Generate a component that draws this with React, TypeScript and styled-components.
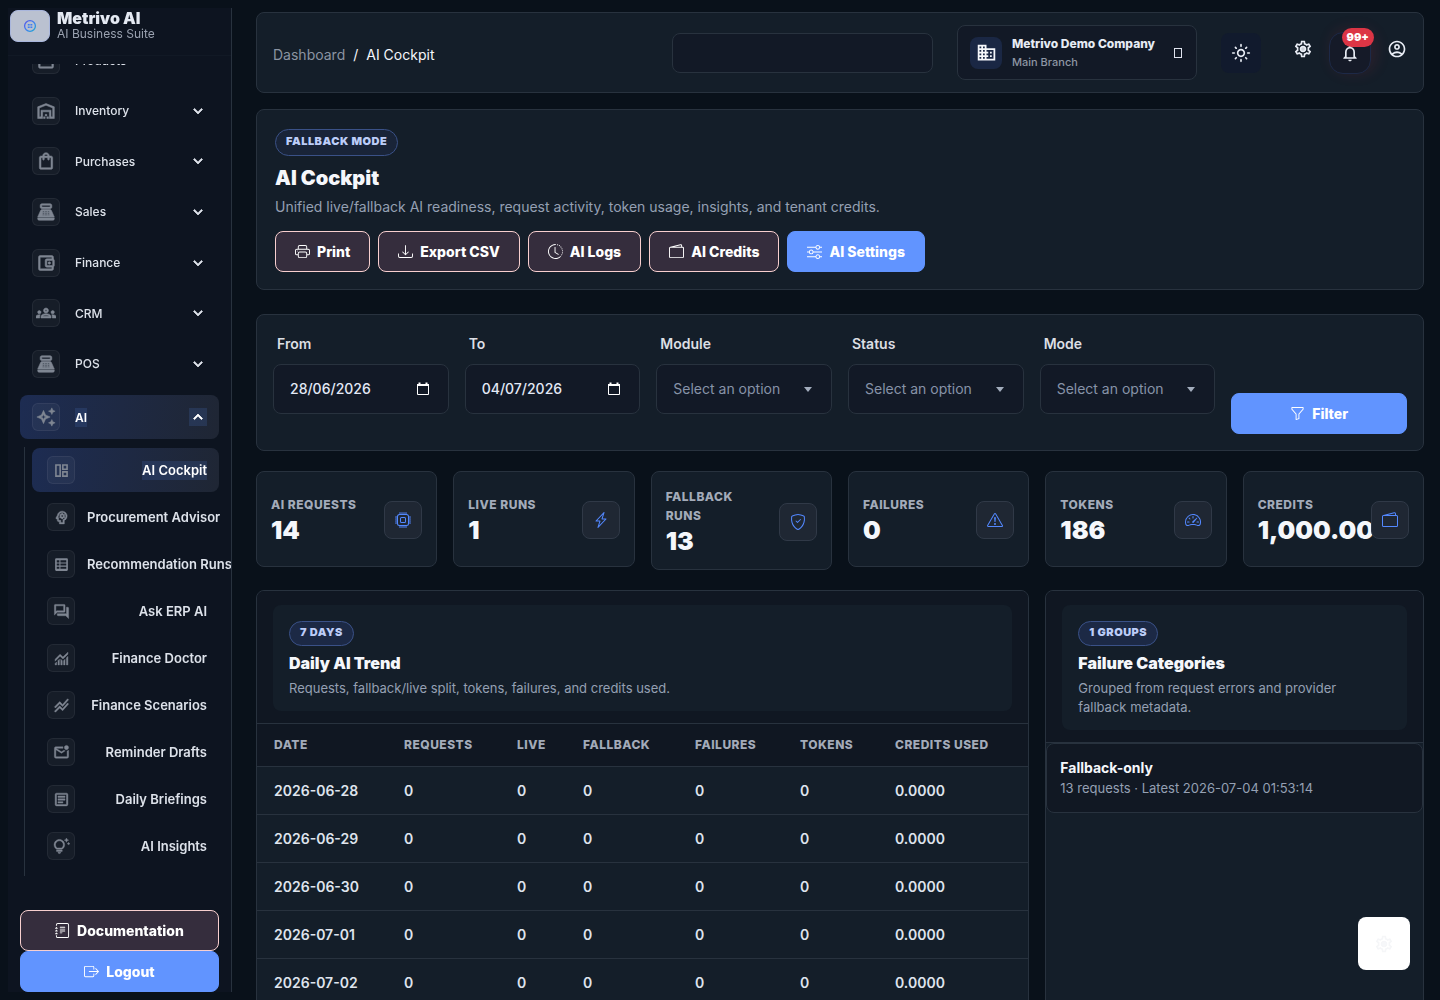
import React from 'react';
import styled, { createGlobalStyle, css } from 'styled-components';
import {
  MdOutlineInventory2, MdOutlineWarehouse, MdOutlineShoppingBag, MdOutlinePointOfSale,
  MdOutlineAccountBalanceWallet, MdOutlineGroups, MdOutlineAutoAwesome,
  MdOutlinePsychology, MdOutlineForum, MdStackedLineChart,
  MdOutlineMarkEmailUnread, MdOutlineArticle, MdOutlineTipsAndUpdates, MdKeyboardArrowDown,
  MdKeyboardArrowUp, MdOutlineBusiness, MdOutlineLightMode, MdOutlineSettings,
  MdOutlineNotifications, MdOutlineAccountCircle,
} from 'react-icons/md';
import {
  BsPrinter, BsDownload, BsClockHistory, BsWallet2, BsSliders, BsFunnel, BsJournalText,
  BsBoxArrowRight, BsCpu, BsLightningCharge, BsShieldCheck, BsExclamationTriangle, BsSpeedometer2,
} from 'react-icons/bs';

const c = {
  page: '#09111a',
  sidebar: '#0d1420',
  card: '#141e29',
  sunken: '#101722',
  field: '#121926',
  line: '#28323e',
  text: '#f5f7fb',
  muted: '#95a0b3',
  blue: '#6194ff',
  pink: '#f8cfcf',
  plum: '#352d3d',
};

const Global = createGlobalStyle`
  *, *::before, *::after { box-sizing: border-box; }
  body { margin: 0; background: ${c.page}; color: ${c.text}; font: 400 14px/19px Inter, "Liberation Sans", sans-serif; }
  button, input, select { font: inherit; color: inherit; }
  h1, h2, p, ul { margin: 0; padding: 0; }
  ul { list-style: none; }
  a { color: inherit; text-decoration: none; }
`;

const Shell = styled.div`
  display: flex;
  height: 100vh;
`;

const Sidebar = styled.aside`
  display: flex;
  flex-direction: column;
  flex: 0 0 224px;
  margin: 8px 0 8px 8px;
  background: ${c.sidebar};
  border-right: 1px solid ${c.line};
  overflow: hidden;
  will-change: transform;
`;

const Brand = styled.a`
  display: flex;
  flex: 0 0 48px;
  align-items: flex-start;
  gap: 7px;
  padding: 2px;
  border-bottom: 1px solid #111925;
`;

const BrandMark = styled.span`
  display: grid;
  place-items: center;
  width: 40px;
  height: 32px;
  border: 1px solid #a9b6dc;
  border-radius: 8px;
  background: #bac1d0;
`;

const BrandName = styled.strong`
  display: block;
  font-size: 16px;
  font-weight: 900;
  line-height: 16px;
  color: #e4e9f2;
`;

const BrandSub = styled.span`
  display: block;
  font-size: 12px;
  line-height: 16px;
  color: #9aa2b0;
`;

const NavScroll = styled.nav`
  flex: 1;
  min-height: 0;
  margin-top: 8px;
  padding: 0 12px;
  overflow: hidden;
`;

const NavList = styled.ul`
  display: grid;
  align-content: space-between;
  height: 348px;
  margin: -26px 0 9px;
`;

const NavLink = styled.a<{ $active?: boolean }>`
  display: flex;
  align-items: center;
  height: 44px;
  padding: 0 12px;
  border-radius: 8px;
  color: #dde2ea;
  font-size: 12px;
  font-weight: 500;
  ${(p) => p.$active && css`
    background: linear-gradient(100deg, #1d2c52, #1f2634);
    color: #fff;
    font-weight: 600;
  `}
`;

const NavIcon = styled.span`
  display: grid;
  flex: 0 0 28px;
  place-items: center;
  height: 28px;
  border: 1px solid rgba(255, 255, 255, 0.06);
  border-radius: 6px;
  background: rgba(255, 255, 255, 0.04);
  color: #7f8692;
  svg { stroke-width: 0.6px; }
  [fill='none'] { stroke: none; }
`;

const Mark = styled.span<{ $on?: boolean }>`
  display: inline-flex;
  background: ${(p) => (p.$on ? 'rgba(60, 90, 150, 0.3)' : 'none')};
  svg { stroke-width: 1px; }
  [fill='none'] { stroke: none; }
`;

const NavLabel = styled.span`
  flex: 1;
  margin-left: 15px;
`;

const SubList = styled.ul`
  display: grid;
  grid-template-columns: minmax(0, 1fr);
  gap: 3px;
  margin: 8px 0 0 4px;
  padding: 1px 0 8px 7px;
  border-left: 1px solid ${c.line};
`;

const SubLink = styled(NavLink)`
  justify-content: space-between;
  gap: 12px;
  padding: 0 12px 0 15px;
  font-size: 13px;
  font-weight: 600;
  white-space: nowrap;
`;

const SideFooter = styled.div`
  display: grid;
  padding: 0 12px;
`;

const Button = styled.button<{ $primary?: boolean }>`
  display: inline-flex;
  align-items: center;
  justify-content: center;
  gap: 7px;
  height: 41px;
  padding: 0 19px;
  border: 1px solid ${(p) => (p.$primary ? c.blue : c.pink)};
  border-radius: 8px;
  background: ${(p) => (p.$primary ? c.blue : c.plum)};
  color: #fff;
  font-size: 14px;
  font-weight: 800;
  white-space: nowrap;
  cursor: pointer;
`;

const Main = styled.main`
  flex: 1;
  min-width: 0;
  padding: 12px 16px 24px 24px;
  overflow-y: auto;
  scrollbar-width: none;
`;

const Card = styled.section`
  border: 1px solid ${c.line};
  border-radius: 8px;
  background: ${c.card};
`;

const TopBar = styled.header`
  display: flex;
  align-items: center;
  height: 81px;
  padding: 0 16px;
  border: 1px solid ${c.line};
  border-radius: 8px;
  background: ${c.card};
`;

const Crumbs = styled.nav`
  display: flex;
  gap: 8px;
  margin-right: auto;
  padding-top: 4px;
  font-size: 14px;
  color: ${c.text};
  a { color: #8b94a2; }
`;

const Search = styled.input`
  width: 261px;
  height: 40px;
  padding: 0 16px;
  border: 1px solid ${c.line};
  border-radius: 8px;
  background: ${c.field};
`;

const Company = styled.button`
  display: flex;
  align-items: center;
  gap: 10px;
  width: 240px;
  height: 55px;
  margin-left: 24px;
  padding: 0 14px 0 12px;
  border: 1px solid ${c.line};
  border-radius: 8px;
  background: ${c.field};
  text-align: left;
`;

const CompanyIcon = styled.span`
  display: grid;
  place-items: center;
  width: 32px;
  height: 32px;
  border-radius: 8px;
  background: #1a2744;
`;

const CompanyText = styled.span`
  flex: 1;
  white-space: nowrap;
  strong { display: block; font-size: 12px; font-weight: 800; line-height: 18px; color: #e6ebf4; }
  small { display: block; font-size: 11px; font-weight: 500; line-height: 18px; color: #8e96a4; }
`;

const EmptyGlyph = styled.span`
  width: 8px;
  height: 10px;
  border: 1px solid #dfe3ee;
`;

const IconButton = styled.button<{ $tone?: 'tile' | 'bell' }>`
  position: relative;
  display: grid;
  place-items: center;
  width: 20px;
  height: 40px;
  padding: 0;
  border: 0;
  background: none;
  color: #e9edf5;
  ${(p) => p.$tone === 'tile' && css`width: 40px; border-radius: 8px; background: #111a2d;`}
  ${(p) => p.$tone === 'bell' && css`
    width: 42px; height: 42px; border: 1px solid #1d2947; border-radius: 14px; background: #151a28;
    box-shadow: 4px -2px 16px rgba(220, 53, 69, 0.14);
  `}
`;

const Actions = styled.div`
  display: flex;
  align-items: center;
  margin-left: 24px;
`;

const Raised = styled.span`
  display: flex;
  gap: 16px;
  margin-left: 32px;
  & > button:nth-child(odd) { margin-bottom: 8px; height: 34px; }
`;

const Count = styled.span`
  position: absolute;
  top: -5px;
  right: -4px;
  padding: 0 5px;
  border-radius: 10px;
  background: #dc3545;
  color: #fff;
  font-size: 11px;
  font-weight: 900;
  line-height: 19px;
`;

const Hero = styled(Card)`
  margin-top: 16px;
  padding: 19px 18px 17px;
`;

const Badge = styled.span<{ $soft?: boolean }>`
  display: inline-flex;
  height: ${(p) => (p.$soft ? 27 : 25)}px;
  padding: ${(p) => (p.$soft ? '2px 10px' : '1px 10px')};
  border: 1px solid #3a5187;
  border-radius: 14px;
  background: ${(p) => (p.$soft ? '#192438' : '#1c2945')};
  color: #bccdf8;
  font-size: 11px;
  font-weight: 900;
  letter-spacing: 0.5px;
`;

const Title = styled.h1`
  margin-top: 8px;
  font-size: 20px;
  font-weight: 900;
  line-height: 28px;
`;

const Lead = styled.p`
  margin-top: 4px;
  font-size: 14px;
  line-height: 22px;
  color: ${c.muted};
`;

const ButtonRow = styled.div`
  display: flex;
  flex-wrap: wrap;
  gap: 8px;
  margin-top: 13px;
`;

const Filters = styled.form`
  display: grid;
  grid-template-columns: repeat(6, minmax(0, 1fr));
  align-items: end;
  gap: 16px;
  margin-top: 24px;
  padding: 16px;
  border: 1px solid ${c.line};
  border-radius: 8px;
  background: ${c.card};
`;

const Field = styled.div`
  display: grid;
  gap: 8px;
  padding-bottom: 20px;
  label { padding: 3px 4px; font-weight: 600; color: #dcdfe4; }
`;

const control = css`
  width: 100%;
  height: 50px;
  padding: 0 16px 2px;
  border: 1px solid ${c.line};
  border-radius: 8px;
  background: ${c.field};
  font-size: 14px;
`;

const ControlWrap = styled.div<{ $caret?: boolean }>`
  position: relative;
  display: grid;
  ${(p) => p.$caret && css`
    &::after {
      content: '';
      position: absolute;
      top: 23px;
      right: 20px;
      border: 4px solid transparent;
      border-top: 5px solid #a3adbd;
      border-bottom: 0;
      pointer-events: none;
    }
  `}
`;

const DateInput = styled.input`
  ${control}
  font-weight: 500;
  color: #e3e9f6;
`;

const DateButton = styled.button`
  position: absolute;
  top: 17px;
  right: 18px;
  display: grid;
  padding: 0;
  border: 0;
  background: none;
`;

const Select = styled.select`
  ${control}
  appearance: none;
  color: #8793a8;
`;

const Stats = styled.div`
  display: grid;
  grid-template-columns: repeat(6, minmax(0, 1fr));
  align-items: start;
  gap: 16px;
  margin-top: 20px;
`;

const Stat = styled(Card)`
  display: flex;
  align-items: center;
  gap: 12px;
  min-height: 96px;
  padding: 15px 14px 13px;
`;

const StatText = styled.div`
  flex: 1;
  min-width: 0;
`;

const StatLabel = styled.p`
  font-size: 12px;
  font-weight: 800;
  letter-spacing: 0.5px;
  color: #a3abb9;
`;

const StatValue = styled.p`
  padding-top: 2px;
  font-size: 25px;
  font-weight: 900;
  line-height: 29px;
`;

const StatIcon = styled.span`
  display: grid;
  flex: 0 0 38px;
  place-items: center;
  height: 38px;
  border: 1px solid #303947;
  border-radius: 8px;
  background: #1f2733;
  color: #5388ff;
`;

const Panels = styled.div`
  display: grid;
  grid-template-columns: repeat(12, minmax(0, 1fr));
  gap: 16px;
  margin-top: 20px;
`;

const Panel = styled(Card)<{ $span: number }>`
  grid-column: span ${(p) => p.$span};
  overflow: hidden;
`;

const PanelHead = styled.div`
  padding: 14px 16px 12px;
  border-bottom: 1px solid ${c.line};
  background: ${c.sunken};
`;

const PanelIntro = styled.div`
  padding: 16px 16px 13px;
  border-radius: 8px;
  background: ${c.card};
  h2 { margin-top: 5px; font-size: 16px; font-weight: 900; line-height: 24px; }
  p { margin-top: 4px; padding-right: 8px; font-size: 13px; line-height: 19px; color: ${c.muted}; }
`;

const Table = styled.table`
  width: 100%;
  border-collapse: collapse;
  text-align: left;
  th, td { padding: 0 8px 0 17px; border-bottom: 1px solid ${c.line}; }
  th { height: 42px; background: ${c.sunken}; font-size: 12px; font-weight: 800; letter-spacing: 0.5px; color: #a3abb9; }
  td { height: 48px; font-size: 14px; font-weight: 600; color: #dfe4ed; }
`;

const Group = styled.li`
  padding: 14px 13px;
  border: 1px solid ${c.line};
  border-radius: 8px;
  background: #111823;
  strong { display: block; font-weight: 700; line-height: 20px; }
  span { display: block; font-size: 13px; line-height: 20px; color: ${c.muted}; }
`;

const Fab = styled.button`
  position: fixed;
  right: 30px;
  bottom: 30px;
  display: grid;
  place-items: center;
  width: 52px;
  height: 53px;
  padding: 0;
  border: 0;
  border-radius: 8px;
  background: #fff;
  color: #f5f6f8;
`;

const Logo = () => (
  <svg width="14" height="14" viewBox="0 0 14 14" fill="none" strokeWidth="1.3">
    <defs>
      <linearGradient id="brand" x1="0" y1="0" x2="14" y2="14" gradientUnits="userSpaceOnUse">
        <stop offset="0" stopColor="#5b45e8" />
        <stop offset="0.5" stopColor="#3f7ff0" />
        <stop offset="1" stopColor="#12b5c4" />
      </linearGradient>
    </defs>
    <circle cx="7" cy="7" r="5.4" stroke="url(#brand)" />
    <path d="M4.8 5h1.9v1.5H4.8zM7.4 5h1.9v1.5H7.4zM4.8 7.5h1.9V9H4.8zM7.4 7.5h1.9V9H7.4z" fill="#3f7ff0" />
  </svg>
);

const Monitoring = ({ size = 18 }: { size?: number }) => (
  <svg width={size} height={size} viewBox="0 0 24 24" fill="currentColor" stroke="currentColor">
    <path d="M3 21v-2l2-2v4H3zm4 0v-6l2-2v8H7zm4 0v-8l2 2.025V21h-2zm4 0v-5.975l2-2V21h-2zm4 0V11l2-2v12h-2zM3 15.825V13l7-7 4 4 7-7v2.825l-7 7-4-4-7 7z" />
  </svg>
);

const Board = ({ size = 16 }: { size?: number }) => (
  <svg width={size} height={size} viewBox="0 0 16 16" fill="currentColor" fillRule="evenodd">
    <path d="M2 2h5.5v12H2zM3.5 3.5v9H6v-9zM8.5 2H14v5.5H8.5zM10 3.5V6h2.5V3.5zM8.5 8.5H14V14H8.5zM10 10v2.5h2.5V10z" />
  </svg>
);

const RunsTable = ({ size = 16 }: { size?: number }) => (
  <svg width={size} height={size} viewBox="0 0 16 16" fill="currentColor" fillRule="evenodd">
    <path d="M3 2h10a1 1 0 0 1 1 1v10a1 1 0 0 1-1 1H3a1 1 0 0 1-1-1V3a1 1 0 0 1 1-1zM3.5 4v2H6V4zM7 4v2h5.5V4zM3.5 7v2H6V7zM7 7v2h5.5V7zM3.5 10v2H6v-2zM7 10v2h5.5v-2z" />
  </svg>
);

const Gear = ({ size = 20 }: { size?: number }) => (
  <svg width={size} height={size} viewBox="0 0 24 24">
    <MdOutlineSettings size={24} />
    <circle cx="12" cy="12" r="3.4" fill="currentColor" fillOpacity="0.85" />
  </svg>
);

const Calendar = () => (
  <svg width="16" height="16" viewBox="0 0 16 16" fill="none" stroke="#fff">
    <path d="M2.5 3.5h11v10h-11z" />
    <path d="M2 4h12M4.5 1.5v2M11.5 1.5v2" strokeWidth="2" />
  </svg>
);

const modules = [
  { label: 'Products', Icon: MdOutlineInventory2 },
  { label: 'Inventory', Icon: MdOutlineWarehouse },
  { label: 'Purchases', Icon: MdOutlineShoppingBag },
  { label: 'Sales', Icon: MdOutlinePointOfSale },
  { label: 'Finance', Icon: MdOutlineAccountBalanceWallet },
  { label: 'CRM', Icon: MdOutlineGroups },
  { label: 'POS', Icon: MdOutlinePointOfSale },
];

const aiPages = [
  { label: 'AI Cockpit', Icon: Board },
  { label: 'Procurement Advisor', Icon: MdOutlinePsychology },
  { label: 'Recommendation Runs', Icon: RunsTable },
  { label: 'Ask ERP AI', Icon: MdOutlineForum },
  { label: 'Finance Doctor', Icon: Monitoring },
  { label: 'Finance Scenarios', Icon: MdStackedLineChart },
  { label: 'Reminder Drafts', Icon: MdOutlineMarkEmailUnread },
  { label: 'Daily Briefings', Icon: MdOutlineArticle },
  { label: 'AI Insights', Icon: MdOutlineTipsAndUpdates },
];

const stats = [
  { label: 'AI REQUESTS', value: '14', Icon: BsCpu },
  { label: 'LIVE RUNS', value: '1', Icon: BsLightningCharge },
  { label: 'FALLBACK RUNS', value: '13', Icon: BsShieldCheck },
  { label: 'FAILURES', value: '0', Icon: BsExclamationTriangle },
  { label: 'TOKENS', value: '186', Icon: BsSpeedometer2 },
  { label: 'CREDITS', value: '1,000.00', Icon: BsWallet2 },
];

const columns = [
  { name: 'DATE', width: 130 },
  { name: 'REQUESTS', width: 113 },
  { name: 'LIVE', width: 66 },
  { name: 'FALLBACK', width: 112 },
  { name: 'FAILURES', width: 105 },
  { name: 'TOKENS', width: 95 },
  { name: 'CREDITS USED', width: undefined },
];
const days = ['2026-06-28', '2026-06-29', '2026-06-30', '2026-07-01', '2026-07-02', '2026-07-03', '2026-07-04'];

export default function App() {
  return (
    <>
      <Global />
      <Shell>
        <Sidebar>
          <Brand href="#">
            <BrandMark><Logo /></BrandMark>
            <span>
              <BrandName>Metrivo AI</BrandName>
              <BrandSub>AI Business Suite</BrandSub>
            </span>
          </Brand>
          <NavScroll>
            <NavList>
              {modules.map(({ label, Icon }) => (
                <li key={label}>
                  <NavLink href="#">
                    <NavIcon><Icon size={20} /></NavIcon>
                    <NavLabel>{label}</NavLabel>
                    <Mark><MdKeyboardArrowDown size={18} /></Mark>
                  </NavLink>
                </li>
              ))}
            </NavList>
            <NavLink href="#" $active>
              <NavIcon><MdOutlineAutoAwesome size={20} /></NavIcon>
              <NavLabel><Mark $on>AI</Mark></NavLabel>
              <Mark $on><MdKeyboardArrowUp size={18} /></Mark>
            </NavLink>
            <SubList>
              {aiPages.map(({ label, Icon }, i) => (
                <li key={label}>
                  <SubLink href="#" $active={i === 0}>
                    <NavIcon><Icon size={17} /></NavIcon>
                    <Mark $on={i === 0}>{label}</Mark>
                  </SubLink>
                </li>
              ))}
            </SubList>
          </NavScroll>
          <SideFooter>
            <Button><BsJournalText size={15} />Documentation</Button>
            <Button $primary><BsBoxArrowRight size={15} />Logout</Button>
          </SideFooter>
        </Sidebar>

        <Main>
          <TopBar>
            <Crumbs aria-label="Breadcrumb">
              <a href="#">Dashboard</a><span>/</span><span>AI Cockpit</span>
            </Crumbs>
            <Search aria-label="Search" />
            <Company>
              <CompanyIcon><MdOutlineBusiness size={21} /></CompanyIcon>
              <CompanyText>
                <strong>Metrivo Demo Company</strong>
                <small>Main Branch</small>
              </CompanyText>
              <EmptyGlyph />
            </Company>
            <Actions>
              <IconButton $tone="tile" aria-label="Theme"><MdOutlineLightMode size={20} /></IconButton>
              <Raised>
                <IconButton aria-label="Settings"><Gear size={20} /></IconButton>
                <IconButton $tone="bell" aria-label="Notifications">
                  <MdOutlineNotifications size={20} />
                  <Count>99+</Count>
                </IconButton>
                <IconButton aria-label="Account"><MdOutlineAccountCircle size={20} /></IconButton>
              </Raised>
            </Actions>
          </TopBar>

          <Hero>
            <Badge $soft>FALLBACK MODE</Badge>
            <Title>AI Cockpit</Title>
            <Lead>Unified live/fallback AI readiness, request activity, token usage, insights, and tenant credits.</Lead>
            <ButtonRow>
              <Button><BsPrinter size={15} />Print</Button>
              <Button><BsDownload size={15} />Export CSV</Button>
              <Button><BsClockHistory size={15} />AI Logs</Button>
              <Button><BsWallet2 size={15} />AI Credits</Button>
              <Button $primary><BsSliders size={15} />AI Settings</Button>
            </ButtonRow>
          </Hero>

          <Filters onSubmit={(e) => e.preventDefault()}>
            {[['From', '28/06/2026'], ['To', '04/07/2026']].map(([label, value]) => (
              <Field key={label}>
                <label htmlFor={label}>{label}</label>
                <ControlWrap>
                  <DateInput id={label} defaultValue={value} />
                  <DateButton type="button" aria-label={`Pick ${label} date`}><Calendar /></DateButton>
                </ControlWrap>
              </Field>
            ))}
            {['Module', 'Status', 'Mode'].map((label) => (
              <Field key={label}>
                <label htmlFor={label}>{label}</label>
                <ControlWrap $caret>
                  <Select id={label}><option>Select an option</option></Select>
                </ControlWrap>
              </Field>
            ))}
            <Button $primary type="submit"><BsFunnel size={15} />Filter</Button>
          </Filters>

          <Stats>
            {stats.map(({ label, value, Icon }) => (
              <Stat key={label}>
                <StatText>
                  <StatLabel>{label}</StatLabel>
                  <StatValue>{value}</StatValue>
                </StatText>
                <StatIcon><Icon size={16} /></StatIcon>
              </Stat>
            ))}
          </Stats>

          <Panels>
            <Panel $span={8}>
              <PanelHead>
                <PanelIntro>
                  <Badge>7 DAYS</Badge>
                  <h2>Daily AI Trend</h2>
                  <p>Requests, fallback/live split, tokens, failures, and credits used.</p>
                </PanelIntro>
              </PanelHead>
              <Table>
                <colgroup>
                  {columns.map(({ name, width }) => <col key={name} width={width} />)}
                </colgroup>
                <thead>
                  <tr>{columns.map(({ name }) => <th key={name}>{name}</th>)}</tr>
                </thead>
                <tbody>
                  {days.map((day) => (
                    <tr key={day}>
                      <td>{day}</td><td>0</td><td>0</td><td>0</td><td>0</td><td>0</td><td>0.0000</td>
                    </tr>
                  ))}
                </tbody>
              </Table>
            </Panel>
            <Panel $span={4}>
              <PanelHead>
                <PanelIntro>
                  <Badge>1 GROUPS</Badge>
                  <h2>Failure Categories</h2>
                  <p>Grouped from request errors and provider fallback metadata.</p>
                </PanelIntro>
              </PanelHead>
              <ul>
                <Group>
                  <strong>Fallback-only</strong>
                  <span>13 requests · Latest 2026-07-04 01:53:14</span>
                </Group>
              </ul>
            </Panel>
          </Panels>
        </Main>
      </Shell>
      <Fab aria-label="Customize"><Gear size={20} /></Fab>
    </>
  );
}
